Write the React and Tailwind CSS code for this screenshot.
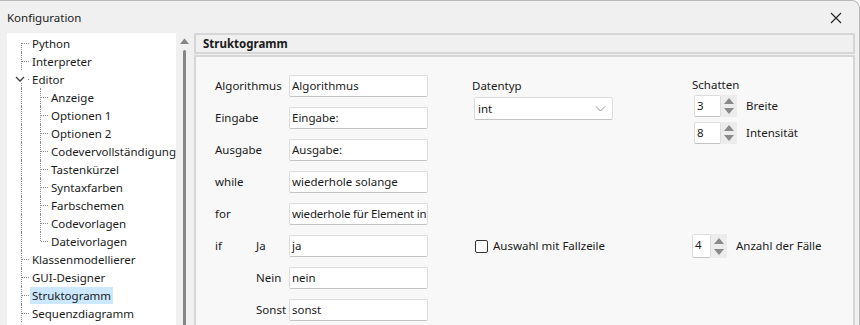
import { useState } from 'react';

const FONT = { fontFamily: '"Noto Sans", "Liberation Sans", sans-serif' };

const tree = [
  { label: 'Python', level: 1, first: true },
  { label: 'Interpreter', level: 1 },
  { label: 'Editor', level: 1, open: true },
  { label: 'Anzeige', level: 2, first: true },
  { label: 'Optionen 1', level: 2 },
  { label: 'Optionen 2', level: 2 },
  { label: 'Codevervollständigung', level: 2 },
  { label: 'Tastenkürzel', level: 2 },
  { label: 'Syntaxfarben', level: 2 },
  { label: 'Farbschemen', level: 2 },
  { label: 'Codevorlagen', level: 2 },
  { label: 'Dateivorlagen', level: 2, last: true },
  { label: 'Klassenmodellierer', level: 1 },
  { label: 'GUI-Designer', level: 1 },
  { label: 'Struktogramm', level: 1, selected: true },
  { label: 'Sequenzdiagramm', level: 1 },
];

// one dotted tree joint: vertical line plus a short horizontal stub
function Joint({ top, bottom, stub = true, w = 'w-[9px]' }) {
  return (
    <div className={`relative h-full ${w} shrink-0`}>
      <div
        className={`absolute left-0 w-0 border-l border-dotted border-[#8c8c8c] ${top ? 'top-[9px]' : 'top-0'} ${bottom ? 'bottom-[9px]' : 'bottom-0'}`}
      />
      {stub && <div className="absolute left-[1px] top-[9px] w-[7px] border-t border-dotted border-[#8c8c8c]" />}
    </div>
  );
}

function TreeRow({ item }) {
  return (
    <div className="flex h-[18px] items-center">
      <div className="w-[14px] shrink-0" />
      {item.open ? (
        <div className="relative h-full w-[9px] shrink-0">
          <svg className="absolute left-[-6px] top-[6px]" width="10" height="6" viewBox="0 0 10 6">
            <path d="M1 1 L5 5 L9 1" fill="none" stroke="#3c3c3c" strokeWidth="1.3" />
          </svg>
          <div className="absolute bottom-0 left-0 top-[13px] border-l border-dotted border-[#8c8c8c]" />
          <div className="absolute left-[7px] top-[9px] h-px w-px bg-[#8c8c8c]" />
        </div>
      ) : item.level === 1 ? (
        <Joint top={item.first} />
      ) : (
        <>
          <Joint stub={false} w="w-[19px]" />
          <Joint bottom={item.last} />
        </>
      )}
      <div
        className={`h-[17px] px-[2px] leading-[17px] text-[#1a1a1a] whitespace-nowrap ${item.selected ? 'bg-[#cce8ff]' : ''}`}
      >
        {item.label}
      </div>
    </div>
  );
}

function TextBox({ value, tight }) {
  return (
    <div
      className={`h-[22px] w-[139px] shrink-0 overflow-hidden whitespace-nowrap rounded-[2px] border border-[#dcdcdc] border-b-[#c4c4c4] bg-white pl-[2px] leading-[20px] text-[#1a1a1a] ${tight ? 'tracking-[-0.2px]' : ''}`}
    >
      {value}
    </div>
  );
}

function Spinner({ value, w = 'w-[27px]', h = 'h-[22px]' }) {
  return (
    <div className={`flex ${h}`}>
      <div className={`${w} h-full rounded-[2px] border border-[#dcdcdc] border-b-[#c4c4c4] bg-white pl-[2px] leading-[20px]`}>
        {value}
      </div>
      <div className="flex h-full w-[16px] flex-col bg-[#ececec]">
        <div className="flex flex-1 items-center justify-center">
          <svg width="10" height="7" viewBox="0 0 10 7"><path d="M0 7 L5 1 L10 7 Z" fill="#8a8a8a" /></svg>
        </div>
        <div className="flex flex-1 items-center justify-center">
          <svg width="10" height="7" viewBox="0 0 10 7"><path d="M0 0 L10 0 L5 6 Z" fill="#8a8a8a" /></svg>
        </div>
      </div>
    </div>
  );
}

function FormRow({ label, sub, children }) {
  return (
    <div className="flex h-[22px] items-center">
      {sub !== undefined ? (
        <>
          <div className="w-[41px] shrink-0">{label}</div>
          <div className="w-[33px] shrink-0">{sub}</div>
        </>
      ) : (
        <div className="w-[74px] shrink-0">{label}</div>
      )}
      {children}
    </div>
  );
}

export default function App() {
  const [fallzeile, setFallzeile] = useState(false);

  return (
    <div
      style={FONT}
      className="flex h-[325px] w-[860px] flex-col overflow-hidden rounded-tr-[8px] border-r border-t border-[#b9b9b9] bg-[#f0f0f0] text-[11.5px] text-[#1a1a1a]"
    >
      {/* title bar */}
      <div className="flex h-[32px] shrink-0 items-center justify-between pl-[7px] pr-[17px] pt-px">
        <span>Konfiguration</span>
        <svg width="12" height="12" viewBox="0 0 12 12">
          <path d="M1 1 L11 11 M11 1 L1 11" stroke="#222" strokeWidth="1.1" />
        </svg>
      </div>

      <div className="flex min-h-0 flex-1 pl-[7px] pr-[4px]">
        {/* tree */}
        <div className="w-[169px] shrink-0 overflow-hidden bg-white pt-px">
          {tree.map((item) => (
            <TreeRow key={item.label} item={item} />
          ))}
        </div>

        {/* scrollbar */}
        <div className="flex w-[17px] shrink-0 flex-col items-center bg-[#f0f0f0] pt-[5px]">
          <svg width="9" height="6" viewBox="0 0 9 6"><path d="M0 6 L4.5 0.5 L9 6 Z" fill="#858585" /></svg>
          <div className="mt-[6px] w-[3px] flex-1 rounded-t-full bg-[#858585]" />
        </div>

        {/* right panel */}
        <div className="ml-[1px] flex min-w-0 flex-1 flex-col">
          <div className="flex h-[21px] shrink-0 items-center border-2 border-[#d6d6d6] bg-[#f0f0f0] pl-[7px] font-bold">
            Struktogramm
          </div>
          <div className="mt-px flex flex-1 border-2 border-b-0 border-[#d6d6d6] bg-[#f8f8f8] pl-[19px] pt-[18px]">
            {/* column 1 */}
            <div className="flex w-[213px] shrink-0 flex-col gap-[10px]">
              <FormRow label="Algorithmus"><TextBox value="Algorithmus" /></FormRow>
              <FormRow label="Eingabe"><TextBox value="Eingabe:" /></FormRow>
              <FormRow label="Ausgabe"><TextBox value="Ausgabe:" /></FormRow>
              <FormRow label="while"><TextBox value="wiederhole solange" /></FormRow>
              <FormRow label="for"><TextBox value="wiederhole für Element in" tight /></FormRow>
              <FormRow label="if" sub="Ja"><TextBox value="ja" /></FormRow>
              <FormRow label="" sub="Nein"><TextBox value="nein" /></FormRow>
              <FormRow label="" sub="Sonst"><TextBox value="sonst" /></FormRow>
            </div>

            {/* column 2 */}
            <div className="ml-[44px] flex w-[180px] shrink-0 flex-col">
              <div className="flex h-[22px] items-center">Datentyp</div>
              <div className="ml-[2px] flex h-[23px] w-[139px] items-center justify-between rounded-[2px] border border-[#dcdcdc] border-b-[#c4c4c4] bg-white pl-[3px] pr-[6px]">
                <span>int</span>
                <svg width="11" height="6" viewBox="0 0 11 6">
                  <path d="M1 0.5 L5.5 5 L10 0.5" fill="none" stroke="#8a8a8a" strokeWidth="1" />
                </svg>
              </div>
              <label className="ml-[3px] mt-[115px] flex h-[22px] cursor-pointer items-center gap-[5px]">
                <span
                  onClick={() => setFallzeile(!fallzeile)}
                  className="flex h-[13px] w-[13px] items-center justify-center rounded-[2px] border border-[#333] bg-white"
                >
                  {fallzeile && (
                    <svg width="9" height="7" viewBox="0 0 9 7"><path d="M1 3.5 L3.5 6 L8 1" fill="none" stroke="#222" strokeWidth="1.3" /></svg>
                  )}
                </span>
                Auswahl mit Fallzeile
              </label>
            </div>

            {/* column 3 */}
            <div className="ml-[40px] flex flex-col">
              <div className="flex h-[20px] items-center">Schatten</div>
              <div className="ml-[2px] flex items-center gap-[9px]">
                <Spinner value="3" />
                <span>Breite</span>
              </div>
              <div className="ml-[2px] mt-[5px] flex items-center gap-[9px]">
                <Spinner value="8" />
                <span>Intensität</span>
              </div>
              <div className="mt-[90px] flex items-center gap-[9px]">
                <Spinner value="4" w="w-[19px]" h="h-[24px]" />
                <span>Anzahl der Fälle</span>
              </div>
            </div>
          </div>
        </div>
      </div>
    </div>
  );
}
